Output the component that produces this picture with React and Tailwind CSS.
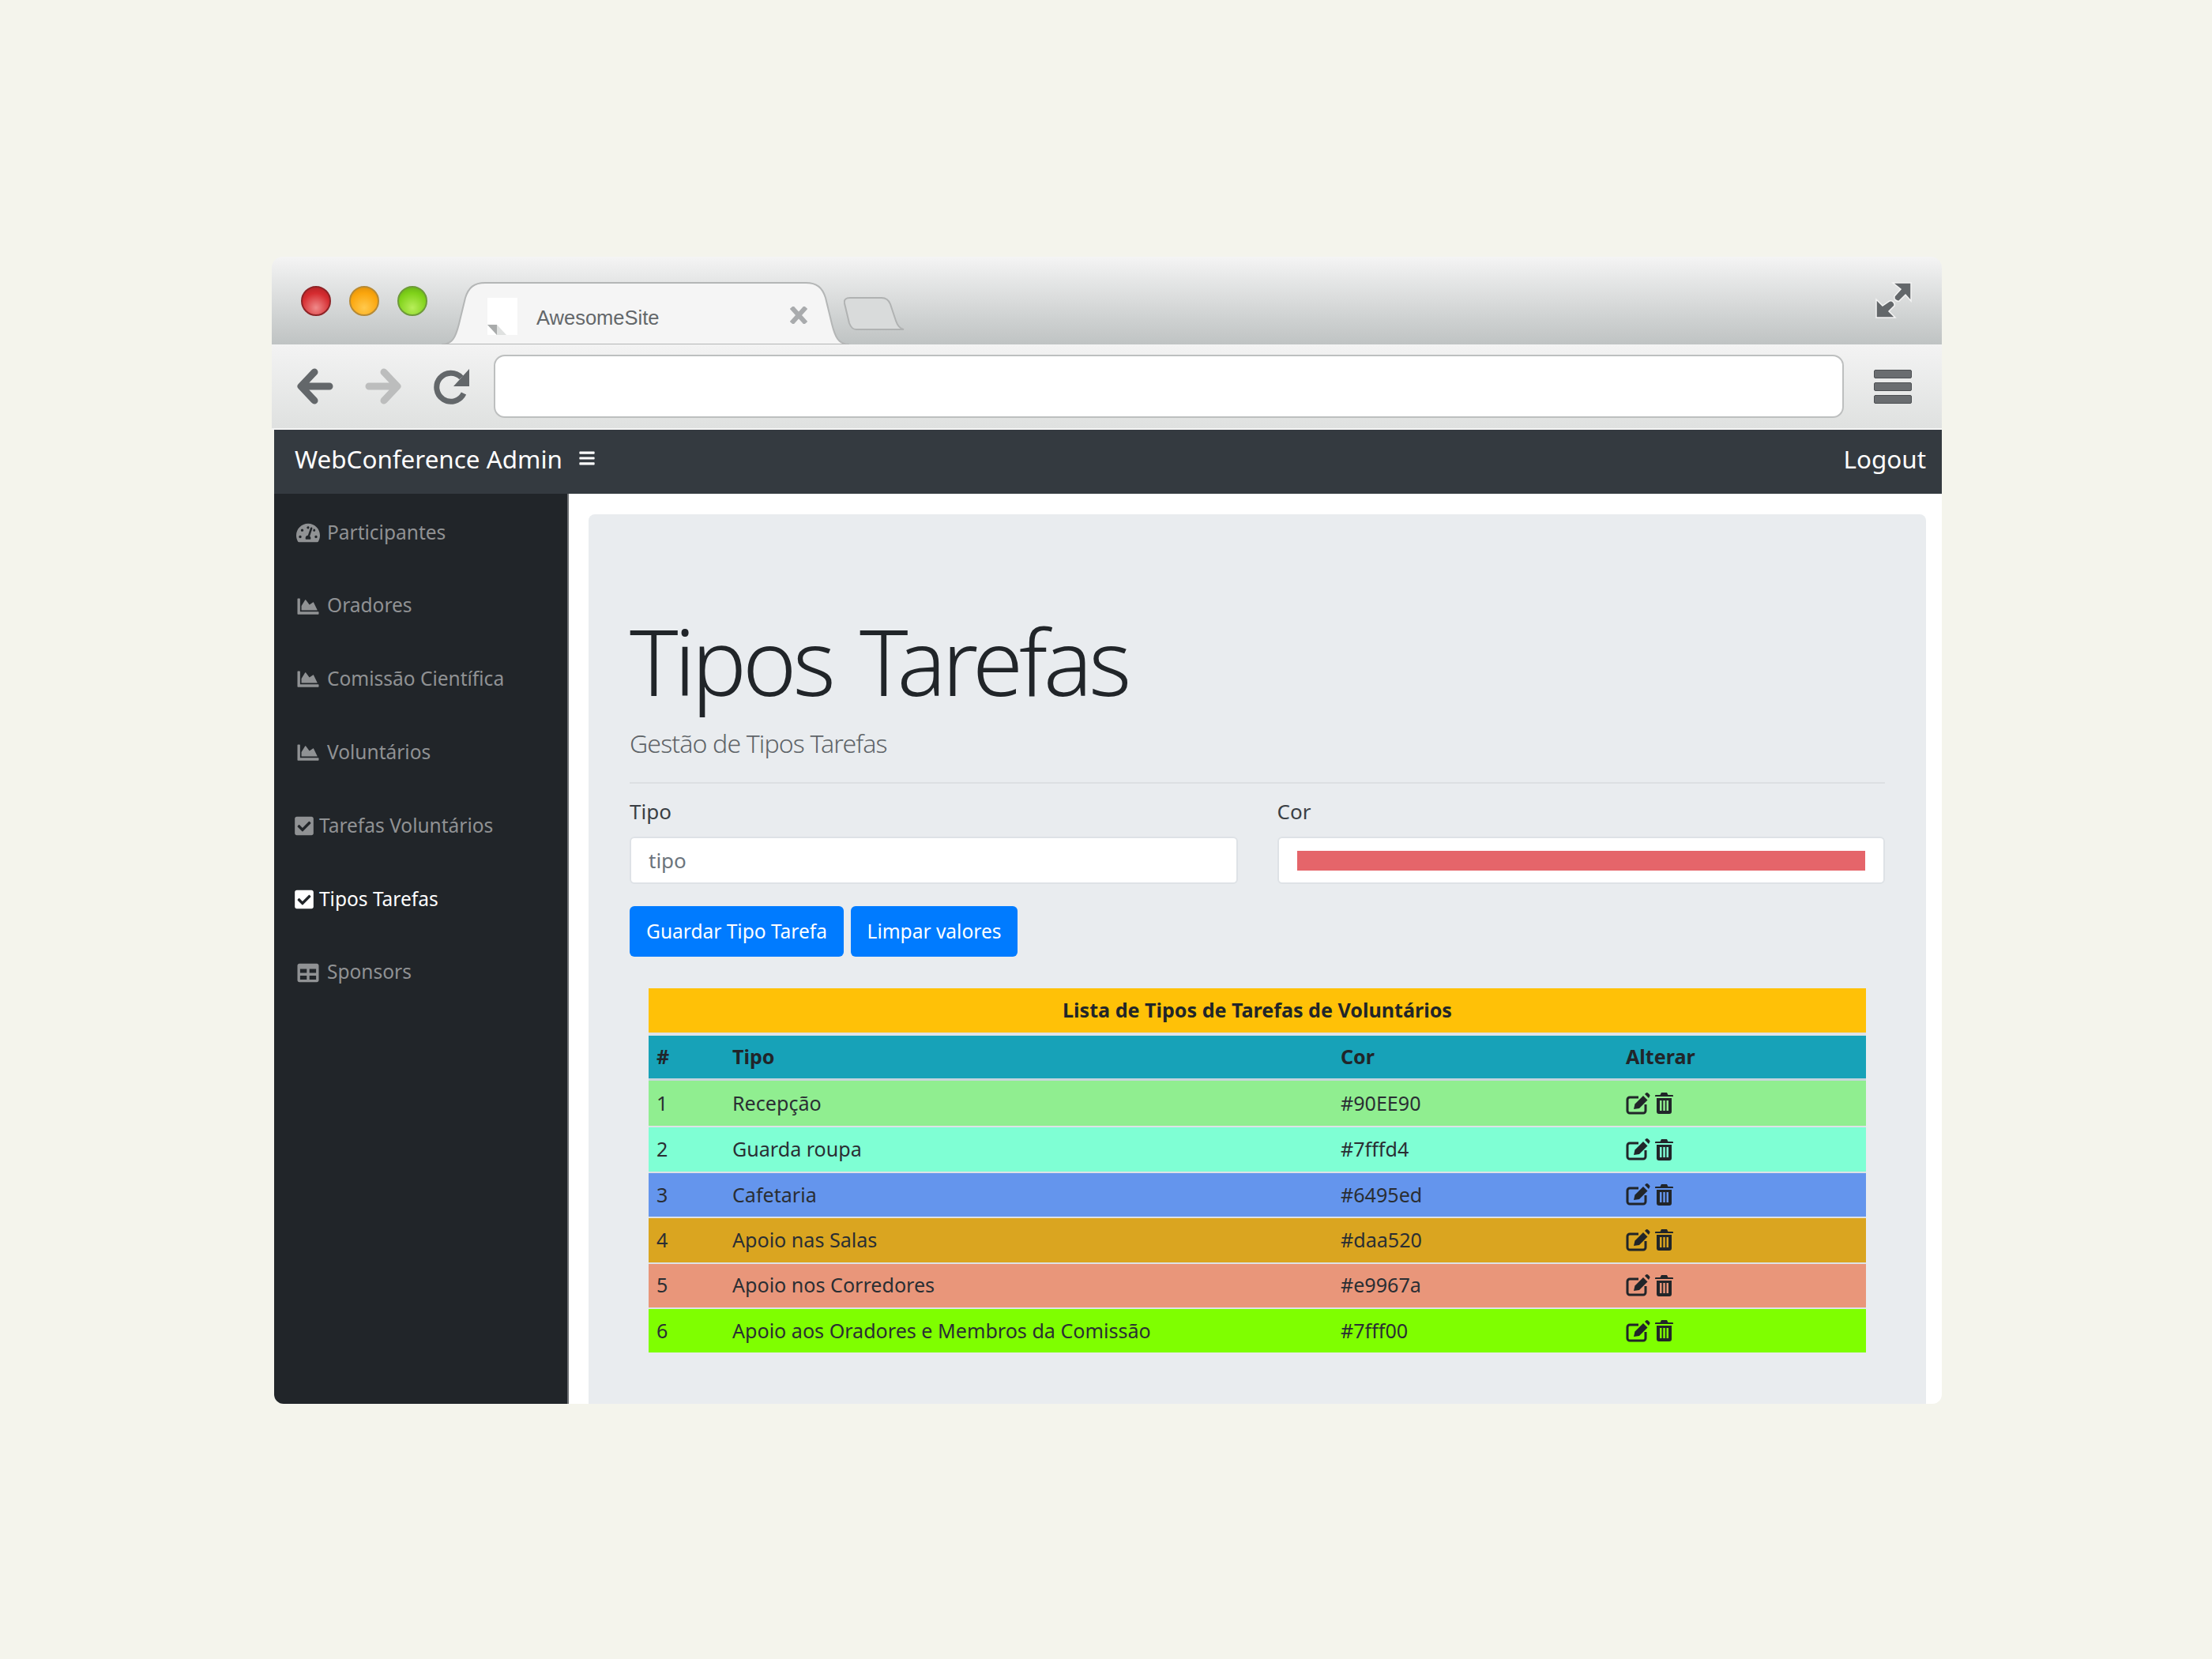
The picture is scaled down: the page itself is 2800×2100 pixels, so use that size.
import { FaBars, FaTachometerAlt, FaChartArea, FaCheckSquare, FaTable } from 'react-icons/fa'

const menu = [
  { label: 'Participantes', icon: FaTachometerAlt },
  { label: 'Oradores', icon: FaChartArea },
  { label: 'Comissão Científica', icon: FaChartArea },
  { label: 'Voluntários', icon: FaChartArea },
  { label: 'Tarefas Voluntários', icon: FaCheckSquare, check: true },
  { label: 'Tipos Tarefas', icon: FaCheckSquare, check: true, active: true },
  { label: 'Sponsors', icon: FaTable },
]

const tipos = [
  { id: 1, nome: 'Recepção', cor: '#90EE90', bg: 'bg-[#90ee90]' },
  { id: 2, nome: 'Guarda roupa', cor: '#7fffd4', bg: 'bg-[#7fffd4]' },
  { id: 3, nome: 'Cafetaria', cor: '#6495ed', bg: 'bg-[#6495ed]' },
  { id: 4, nome: 'Apoio nas Salas', cor: '#daa520', bg: 'bg-[#daa520]' },
  { id: 5, nome: 'Apoio nos Corredores', cor: '#e9967a', bg: 'bg-[#e9967a]' },
  { id: 6, nome: 'Apoio aos Oradores e Membros da Comissão', cor: '#7fff00', bg: 'bg-[#7fff00]' },
]

function Light({ className }) {
  return <span className={`w-[38px] h-[38px] rounded-full border-2 ${className}`} />
}

function EditIcon() {
  return (
    <svg width="31" height="28" viewBox="0 0 31 28" fill="none">
      <path d="M16 6H5a3 3 0 0 0-3 3v14a3 3 0 0 0 3 3h17a3 3 0 0 0 3-3v-8" stroke="#212529" strokeWidth="3" />
      <path d="M10 21l1.500-6.500L22 4l5.500 5.500L17 20z" fill="#212529" />
      <path d="M24 2l1.500-1.500a2 2 0 0 1 2.500 0l2 2a2 2 0 0 1 0 2.500L29 7z" fill="#212529" />
    </svg>
  )
}

function TrashIcon() {
  return (
    <svg width="23" height="27" viewBox="0 0 23 27" fill="#212529">
      <path d="M8 0h7l1.500 3H22a1 1 0 0 1 1 1v1H0V4a1 1 0 0 1 1-1h5.500z" />
      <path d="M2 7h19v17a3 3 0 0 1-3 3H5a3 3 0 0 1-3-3zm4 3v13h2.500V10zm4.300 0v13h2.500V10zm4.200 0v13H17V10z" fillRule="evenodd" />
    </svg>
  )
}

function Toolbar() {
  return (
    <div className="h-[108px] flex items-center bg-gradient-to-b from-[#f3f3f3] to-[#dfe1e0] border-b-2 border-[#f4f4f4] pl-[32px] pr-[38px]">
      <svg width="46" height="46" viewBox="0 0 46 46" fill="none" stroke="#63676a" strokeWidth="9" strokeLinecap="round" strokeLinejoin="round">
        <path d="M22 5 5 23l17 18M9 23h32" />
      </svg>
      <svg className="ml-[40px]" width="46" height="46" viewBox="0 0 46 46" fill="none" stroke="#bcbdbd" strokeWidth="9" strokeLinecap="round" strokeLinejoin="round">
        <path d="M24 5l17 18-17 18M37 23H5" />
      </svg>
      <svg className="ml-[41px]" width="46" height="46" viewBox="0 0 46 46" fill="none">
        <path d="M35 12A18 18 0 1 0 38 32" stroke="#63676a" strokeWidth="7" />
        <path d="M45 1v22H25z" fill="#63676a" />
      </svg>
      <div className="ml-[30px] flex-1 h-[80px] bg-white border-2 border-[#bdbfbf] rounded-[14px]" />
      <div className="ml-[38px] w-[48px] flex flex-col gap-[5px]">
        <span className="h-[11px] bg-[#6a6d70] border border-[#4d5053] rounded-[2px]" />
        <span className="h-[11px] bg-[#6a6d70] border border-[#4d5053] rounded-[2px]" />
        <span className="h-[11px] bg-[#6a6d70] border border-[#4d5053] rounded-[2px]" />
      </div>
    </div>
  )
}

function TitleBar() {
  return (
    <div className="h-[111px] flex bg-gradient-to-b from-[#f4f4f4] to-[#bfc3c3] rounded-t-[14px] pl-[37px] pr-[38px]">
      <div className="flex gap-[23px] pt-[37px]">
        <Light className="bg-[radial-gradient(circle_at_50%_75%,#f08a8a,#d52c30_60%,#a81f22)] border-[#8e2427]" />
        <Light className="bg-[radial-gradient(circle_at_50%_75%,#ffc94d,#fba60d_60%,#d98a08)] border-[#b68a35]" />
        <Light className="bg-[radial-gradient(circle_at_50%_75%,#b8ee5a,#80d21a_60%,#5fa815)] border-[#6e9a3a]" />
      </div>
      {/* tab shape sits behind its contents */}
      <div className="relative ml-[18px] mt-[32px] w-[516px] h-[79px] flex items-start">
        <svg className="absolute inset-0" width="516" height="79" viewBox="0 0 516 79">
          <path d="M0 79c14 0 18-10 22-26l8-33C34 7 41 1 55 1h406c14 0 21 6 25 19l8 33c4 16 8 26 22 26z" fill="#f5f5f5" stroke="#b4b6b6" strokeWidth="2" />
        </svg>
        <div className="relative ml-[58px] mt-[20px] w-[38px] h-[47px] bg-white">
          <svg className="absolute left-0 bottom-0" width="24" height="13" viewBox="0 0 24 13">
            <path d="M0 0h12l12 13H12z" fill="#dfe1e0" />
            <path d="M0 0h12v13z" fill="#a9abab" />
          </svg>
        </div>
        <span className="relative ml-[24px] mt-[30px] text-[25.500px] leading-[30px] text-[#63676a] [font-family:'Liberation_Sans',sans-serif]">AwesomeSite</span>
        <svg className="absolute left-[441px] top-[31px]" width="22" height="22" viewBox="0 0 22 22" stroke="#a9abad" strokeWidth="6">
          <path d="M2 1l18 20M20 1 2 21" />
        </svg>
      </div>
      <div className="ml-[-7px] mt-[51px]">
        <svg width="77" height="42" viewBox="0 0 77 42" fill="none">
          <path d="M1 8C0 3 3 1 8 1h40c6 0 9 3 11 8l7 21c2 6 5 10 10 11H16C11 41 9 38 7 33z" fill="#d9dbdb" stroke="#b0b2b2" strokeWidth="2" />
        </svg>
      </div>
      <div className="ml-auto pt-[32px]">
        <svg width="46" height="46" viewBox="0 0 46 46" fill="#63676a" stroke="#f4f4f4" strokeWidth="1.500">
          <path d="M22 1h23v23l-7-8-8 8c-3 1-7-2-6-6l8-9z" />
          <path d="M1 22v23h24l-8-8 7-7c1-4-3-7-6-6l-9 6z" />
        </svg>
      </div>
    </div>
  )
}

function Sidebar() {
  return (
    <aside className="w-[373px] ml-[3px] flex-none bg-[#212529] rounded-bl-[12px] border-r-2 border-[#6c6f72] pt-[3px]">
      {menu.map(({ label, icon: Icon, check, active }) => (
        <a key={label} className={`h-[92.800px] flex items-center text-[24.500px] ${check ? 'pl-[26px] gap-[7px]' : 'pl-[28px] gap-[9px]'} ${active ? 'text-white' : 'text-[#909294]'}`}>
          <Icon className={check ? 'w-[24px] h-[27px]' : 'w-[30px] h-[27px]'} />
          <span className="mb-[1px]">{label}</span>
        </a>
      ))}
    </aside>
  )
}

function TiposTable() {
  return (
    <table className="mt-[40px] mx-[24px] w-[1541px] table-fixed border-separate border-spacing-0 text-[25.100px] text-[#2a2e33]">
      <colgroup>
        <col className="w-[96px]" />
        <col className="w-[770px]" />
        <col className="w-[361px]" />
        <col className="w-[314px]" />
      </colgroup>
      <thead className="text-[#212529]">
        <tr className="font-bold">
          <th colSpan="4" className="h-[60px] bg-[#ffc107] border-b-[4px] border-[#dee2e6] text-center">Lista de Tipos de Tarefas de Voluntários</th>
        </tr>
        <tr className="font-bold">
          <th className="h-[57px] bg-[#17a2b8] border-b-[3px] border-[#c5d6dc] pl-[10px] text-left">#</th>
          <th className="bg-[#17a2b8] border-b-[3px] border-[#c5d6dc] pl-[10px] text-left">Tipo</th>
          <th className="bg-[#17a2b8] border-b-[3px] border-[#c5d6dc] pl-[10px] text-left">Cor</th>
          <th className="bg-[#17a2b8] border-b-[3px] border-[#c5d6dc] pl-[10px] text-left">Alterar</th>
        </tr>
      </thead>
      <tbody>
        {tipos.map((t, i) => (
          <tr key={t.id} className={t.bg}>
            <td className={`h-[57.400px] pl-[10px] ${i > 0 ? 'border-t-2 border-[#dee2e6]' : ''}`}>{t.id}</td>
            <td className={`pl-[10px] ${i > 0 ? 'border-t-2 border-[#dee2e6]' : ''}`}>{t.nome}</td>
            <td className={`pl-[10px] ${i > 0 ? 'border-t-2 border-[#dee2e6]' : ''}`}>{t.cor}</td>
            <td className={`pl-[10px] ${i > 0 ? 'border-t-2 border-[#dee2e6]' : ''}`}>
              <div className="flex items-center gap-[6px]">
                <EditIcon />
                <TrashIcon />
              </div>
            </td>
          </tr>
        ))}
      </tbody>
    </table>
  )
}

export default function App() {
  return (
    <div className="w-[2800px] h-[2100px] bg-[#f4f4ec] pt-[325px] pl-[344px] font-['Noto_Sans',sans-serif]">
      <div className="w-[2114px] h-[1452px] flex flex-col overflow-hidden">
        <TitleBar />
        <Toolbar />
        <header className="ml-[3px] h-[81px] flex-none flex items-center justify-between bg-[#343a40] text-white pl-[26px] pr-[20px] pb-[8px]">
          <div className="flex items-center gap-[20px]">
            <span className="text-[31.400px]">WebConference Admin</span>
            <FaBars className="w-[22px] h-[22px]" />
          </div>
          <a className="text-[31.400px]">Logout</a>
        </header>
        <div className="flex-1 flex min-h-0">
          <Sidebar />
          <main className="flex-1 bg-white pt-[26px] pl-[25px] pr-[20px] rounded-br-[12px]">
            <section className="h-full bg-[#e9ecef] rounded-t-[8px] px-[52px] pt-[115px] text-[#212529]">
              <h1 className="text-[116px] leading-[140px] font-light tracking-[-5px] [word-spacing:10px]">Tipos Tarefas</h1>
              <p className="mt-[11px] text-[32px] leading-[48px] font-light tracking-[-0.850px] text-[#5f6468]">Gestão de Tipos Tarefas</p>
              <hr className="mt-[25px] border-t-2 border-[#dcdfe2]" />
              <div className="mt-[17px] grid grid-cols-2 gap-x-[50px]">
                <div>
                  <label className="block text-[26px] leading-[36px] text-[#3a3f44]">Tipo</label>
                  <input placeholder="tipo" readOnly className="mt-[14px] w-full h-[60px] px-[22px] bg-white border-2 border-[#dee2e6] rounded-[6px] text-[26px] placeholder:text-[#6c757d]" />
                </div>
                <div>
                  <label className="block text-[26px] leading-[36px] text-[#3a3f44]">Cor</label>
                  <div className="mt-[14px] h-[60px] px-[23px] flex items-center bg-white border-2 border-[#dee2e6] rounded-[6px]">
                    <div className="w-full h-[25px] bg-[#e5656a]" />
                  </div>
                </div>
              </div>
              <div className="mt-[28px] flex gap-[9px]">
                <button className="w-[271px] h-[64px] bg-[#007bff] text-white text-[24.500px] rounded-[6px]">Guardar Tipo Tarefa</button>
                <button className="w-[211px] h-[64px] bg-[#007bff] text-white text-[24.500px] rounded-[6px]">Limpar valores</button>
              </div>
              <TiposTable />
            </section>
          </main>
        </div>
      </div>
    </div>
  )
}
